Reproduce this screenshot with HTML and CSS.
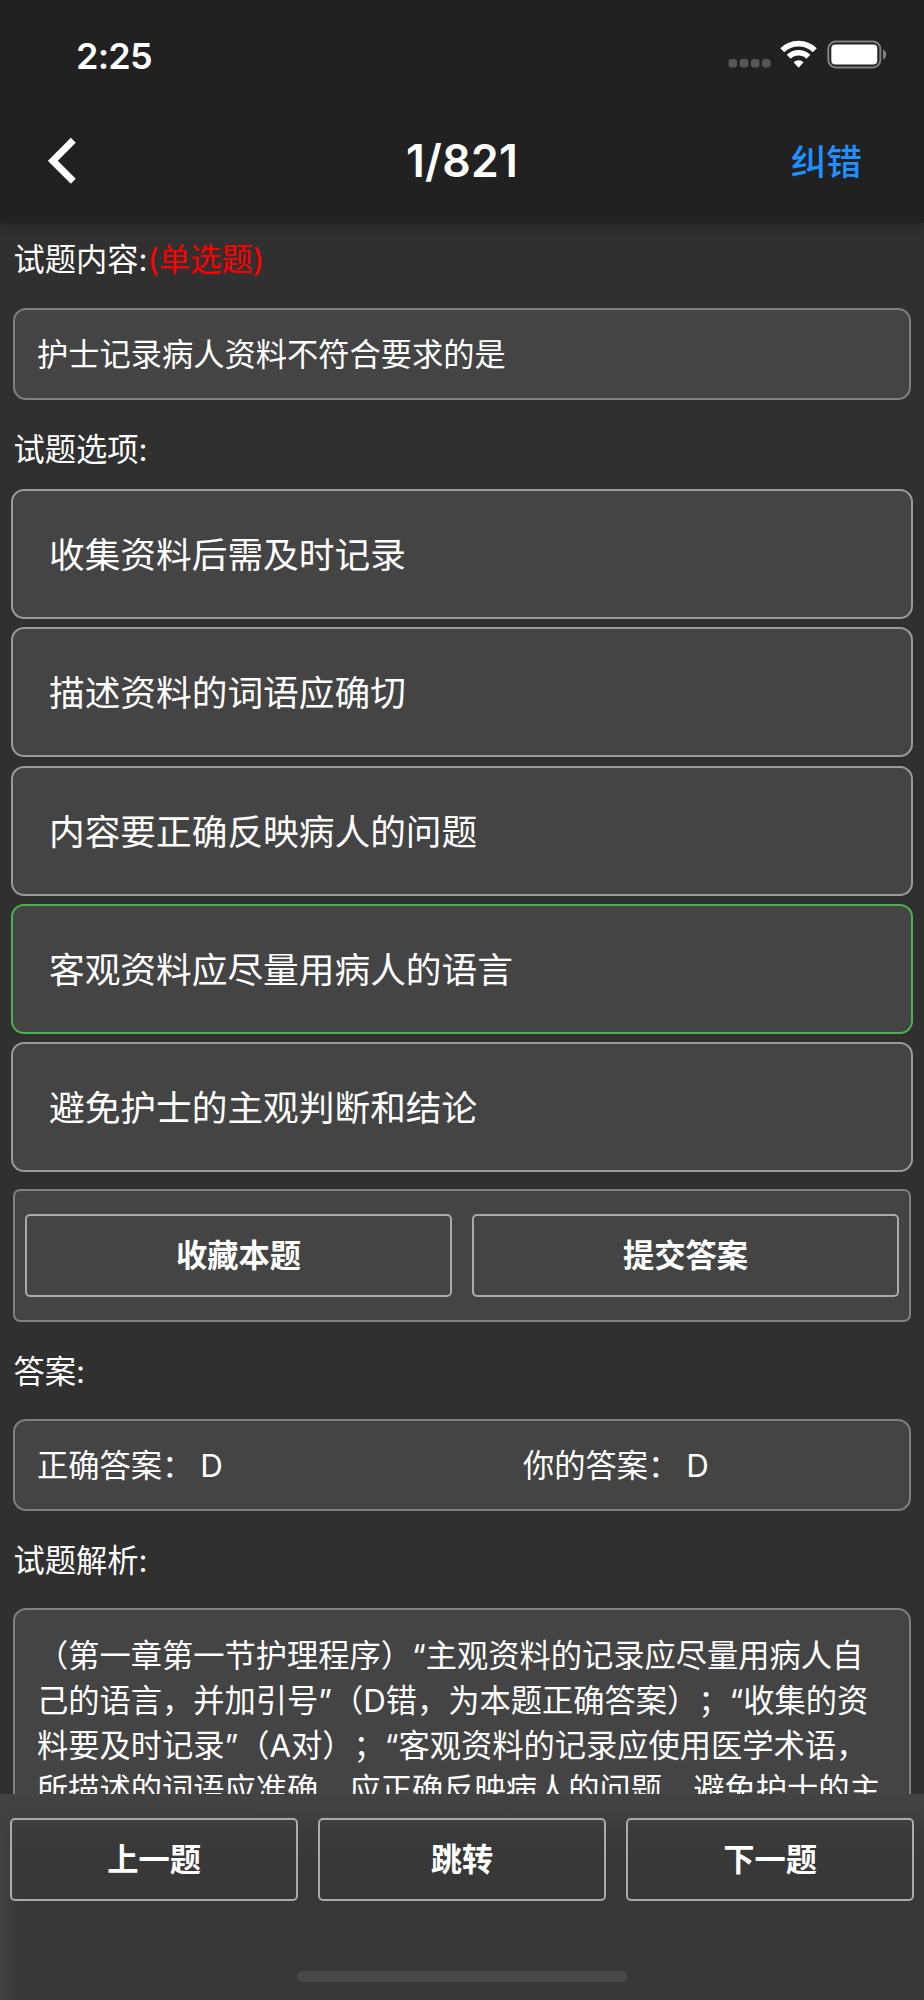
FILE: index.html
```html
<!DOCTYPE html>
<html lang="zh-CN">
<head>
<meta charset="utf-8">
<title>1/821</title>
<link rel="stylesheet" href="styles.css">
</head>
<body>
<div class="screen">
  <header class="header">
    <div class="status">
      <span class="time">2:25</span>
      <svg class="status-icons" width="162" height="36" viewBox="0 0 162 36">
        <g fill="#565656">
          <rect x="2.500" y="21" width="8.600" height="8.600" rx="3"/>
          <rect x="13.700" y="21" width="8.600" height="8.600" rx="3"/>
          <rect x="24.900" y="21" width="8.600" height="8.600" rx="3"/>
          <rect x="36" y="21" width="8.600" height="8.600" rx="3"/>
        </g>
        <g fill="none" stroke="#fff" stroke-width="5.600">
          <path d="M56.300 12.300a23 23 0 0 1 32.500 0"/>
          <path d="M62.700 18.800a14 14 0 0 1 19.700 0"/>
        </g>
        <path fill="#fff" d="M67.600 24.300a7.100 7.100 0 0 1 10 0l-5 5.500z"/>
        <rect x="102.300" y="3.500" width="52" height="26" rx="7.500" fill="none" stroke="#808080" stroke-width="2"/>
        <rect x="105.300" y="6.500" width="46" height="20" rx="4" fill="#fff"/>
        <path fill="#808080" d="M157 11.500a5.500 5.500 0 0 1 0 10z"/>
      </svg>
    </div>
    <nav class="nav">
      <svg class="back" width="30" height="48" viewBox="0 0 30 48"><path d="M25.300 3.300 4.800 23.800 25.300 44.300" fill="none" stroke="#fff" stroke-width="7"/></svg>
      <h1 class="title">1/821</h1>
      <span class="report">纠错</span>
    </nav>
  </header>
  <main class="content">
    <h2 class="label label-first">试题内容:<span class="kind">(单选题)</span></h2>
    <section class="card">护士记录病人资料不符合要求的是</section>
    <h2 class="label label-options">试题选项:</h2>
    <ul class="options">
      <li class="option">收集资料后需及时记录</li>
      <li class="option">描述资料的词语应确切</li>
      <li class="option">内容要正确反映病人的问题</li>
      <li class="option correct">客观资料应尽量用病人的语言</li>
      <li class="option">避免护士的主观判断和结论</li>
    </ul>
    <div class="actions">
      <button class="btn">收藏本题</button>
      <button class="btn">提交答案</button>
    </div>
    <h2 class="label">答案:</h2>
    <section class="card answers">
      <span>正确答案：<b class="value">D</b></span>
      <span>你的答案：<b class="value">D</b></span>
    </section>
    <h2 class="label">试题解析:</h2>
    <section class="card analysis">（第一章第一节护理程序）“主观资料的记录应尽量用病人自<br>己的语言，并加引号”（D错，为本题正确答案）；“收集的资<br>料要及时记录”（A对）；“客观资料的记录应使用医学术语，<br>所描述的词语应准确，应正确反映病人的问题，避免护士的主</section>
  </main>
  <footer class="footer">
    <div class="pager">
      <button class="btn">上一题</button>
      <button class="btn">跳转</button>
      <button class="btn">下一题</button>
    </div>
    <div class="home"></div>
  </footer>
</div>
</body>
</html>
```
FILE: styles.css
```css
* { box-sizing: border-box; }
body {
  margin: 0;
  background: #303030;
  color: #fff;
  font-family: Inter, "Noto Sans CJK SC", sans-serif;
  font-size: 31.25px;
  text-spacing-trim: space-all;
}
.screen { display: flex; flex-direction: column; width: 924px; height: 2000px; overflow: hidden; }
.header { position: relative; flex: none; height: 223px; background: #212121; box-shadow: 0 1px 9px rgba(0, 0, 0, .35); }
.status { display: flex; justify-content: space-between; align-items: center; height: 112px; padding: 0 36px 0 76px; }
.time { font-size: 36px; font-weight: 600; line-height: 40px; letter-spacing: -.8px; }
.nav { display: grid; grid-template-columns: 1fr auto 1fr; align-items: center; height: 98px; padding: 0 48px; }
.title { margin: 0; font-size: 44.5px; font-weight: 600; line-height: 50px; letter-spacing: .3px; }
.report { justify-self: end; margin: 2px 14px 0 0; color: #1e90ff; font-size: 35.7px; font-weight: 500; line-height: 40px; }
.content { flex: 1; min-height: 0; overflow: hidden; }
.label { margin: 0; padding-left: 13.5px; height: 97px; line-height: 100px; font-size: 31.25px; font-weight: 400; white-space: nowrap; }
.label-first { height: 85px; line-height: 75px; }
.label-options { height: 89px; line-height: 100px; }
.kind { color: #f00; }
.card { margin: 0 13px; height: 92px; padding: 0 22px; border: 2px solid #808080; border-radius: 13px; background: #444; line-height: 90px; white-space: nowrap; }
.options { display: flex; flex-direction: column; gap: 8.3px; margin: 0 11px 17px; padding: 0; list-style: none; }
.option { height: 130px; padding-left: 36px; border: 2px solid #9a9a9a; border-radius: 13px; background: #444; font-size: 35.7px; line-height: 129px; }
.correct { border-color: #4caf50; }
.actions { display: flex; gap: 20px; height: 133px; margin: 0 13px; padding: 23px 10px; border: 2px solid #808080; border-radius: 7px; background: #444; }
.btn { flex: 1; height: 83px; padding: 2px 0 0; border: 2px solid #aaa; border-radius: 5px; background: transparent; color: #fff; font: 700 31.25px/77px Inter, "Noto Sans CJK SC", sans-serif; }
.answers { display: grid; grid-template-columns: 486px 1fr; }
.value { margin-left: 7px; font-weight: 400; }
.analysis { height: 300px; padding-top: 24px; line-height: 44.7px; }
.footer { position: relative; flex: none; height: 206px; padding: 24px 10px 0; background: linear-gradient(to right, #424242, rgba(66, 66, 66, 0) 18px), linear-gradient(#434343, #414141 20px, #3b3b3b 34px, #383838 60px); }
.pager { display: flex; gap: 20px; }
.home { width: 330px; height: 11px; margin: 70px auto 0; border-radius: 6px; background: #494949; }
```
